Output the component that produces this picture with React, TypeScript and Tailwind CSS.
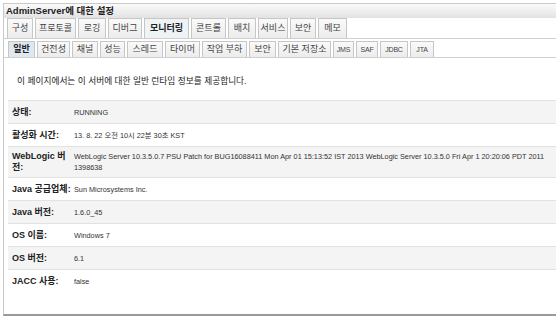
const topTabs = [
  { label: "구성", w: "w-[26px]" },
  { label: "프로토콜", w: "w-[41px]" },
  { label: "로깅", w: "w-[28px]" },
  { label: "디버그", w: "w-[34px]" },
  { label: "모니터링", w: "w-[45px]", active: true },
  { label: "콘트롤", w: "w-[35px]" },
  { label: "배치", w: "w-[28px]" },
  { label: "서비스", w: "w-[30px]" },
  { label: "보안", w: "w-[26px]" },
  { label: "메모", w: "w-[29px]" },
];

const subTabs = [
  { label: "일반", w: "w-[27px]", active: true },
  { label: "건전성", w: "w-[33px]" },
  { label: "채널", w: "w-[26px]" },
  { label: "성능", w: "w-[25px]" },
  { label: "스레드", w: "w-[36px]" },
  { label: "타이머", w: "w-[35px]" },
  { label: "작업 부하", w: "w-[45px]" },
  { label: "보안", w: "w-[27px]" },
  { label: "기본 저장소", w: "w-[53px]" },
  { label: "JMS", w: "w-[21px]", small: true },
  { label: "SAF", w: "w-[22px]", small: true },
  { label: "JDBC", w: "w-[28px]", small: true },
  { label: "JTA", w: "w-[24px]", small: true },
];

const rows = [
  { label: ["상태:"], value: ["RUNNING"] },
  { label: ["활성화 시간:"], value: ["13. 8. 22 오전 10시 22분 30초 KST"] },
  {
    label: ["WebLogic 버", "전:"],
    value: [
      "WebLogic Server 10.3.5.0.7 PSU Patch for BUG16088411 Mon Apr 01 15:13:52 IST 2013 WebLogic Server 10.3.5.0 Fri Apr 1 20:20:06 PDT 2011",
      "1398638",
    ],
    tall: true,
  },
  { label: ["Java 공급업체:"], value: ["Sun Microsystems Inc."] },
  { label: ["Java 버전:"], value: ["1.6.0_45"] },
  { label: ["OS 이름:"], value: ["Windows 7"] },
  { label: ["OS 버전:"], value: ["6.1"] },
  { label: ["JACC 사용:"], value: ["false"] },
];

export default function App() {
  return (
    <div className="w-[556px] h-[328px] overflow-hidden bg-white font-['Liberation_Sans','Noto_Sans_CJK_KR',sans-serif] text-[#222]">
      <div className="mt-[3px] ml-[3px] w-[620px] h-[313px] border border-[#c9c9c9] border-b-2 border-b-[#9a9a9a] bg-white">
        {/* title */}
        <div className="h-[14px] bg-gradient-to-b from-[#fbfbfb] to-[#e2e2e2] pl-[2px] flex items-center text-[9.5px] font-bold text-[#222] leading-none">
          AdminServer에 대한 설정
        </div>

        {/* top tabs */}
        <div className="flex gap-[2px] pl-[3px] border-b border-[#cfcfcf]">
          {topTabs.map((t, i) => (
            <div
              key={i}
              className={`${t.w} h-[20px] flex items-center justify-center border border-b-0 border-[#c6c6c6] text-[9px] leading-none whitespace-nowrap ${
                t.active
                  ? "bg-[#eef3f6] font-bold text-[#222]"
                  : "bg-gradient-to-b from-[#fafafa] to-[#ececec] text-[#444]"
              }`}
            >
              {t.label}
            </div>
          ))}
        </div>

        {/* sub tabs */}
        <div className="flex gap-[2px] pl-[4px] pt-[2px] border-b border-[#cfcfcf]">
          {subTabs.map((t, i) => (
            <div
              key={i}
              className={`${t.w} h-[16px] flex items-center justify-center border border-b-0 border-[#c6c6c6] leading-none whitespace-nowrap ${
                t.small ? "text-[7px] tracking-[-0.2px]" : "text-[9px]"
              } ${
                t.active
                  ? "bg-[#dde8f0] font-bold text-[#222]"
                  : "bg-gradient-to-b from-[#fafafa] to-[#ececec] text-[#444]"
              }`}
            >
              {t.label}
            </div>
          ))}
        </div>

        <p className="mt-[17px] pl-[13px] text-[8.7px] leading-[12px] text-[#222]">
          이 페이지에서는 이 서버에 대한 일반 런타임 정보를 제공합니다.
        </p>

        {/* table */}
        <div className="mt-[13px] ml-[4px]">
          {rows.map((r, i) => (
            <div
              key={i}
              className={`flex items-center border-t border-[#e2e2e2] ${
                r.tall ? "h-[31px]" : "h-[23px]"
              } ${i % 2 === 0 ? "bg-[#f4f4f4]" : "bg-white"}`}
            >
              <div className="min-w-[64px] pl-[4px] flex flex-col text-[9px] font-bold leading-[11px] whitespace-nowrap">
                {r.label.map((l, j) => (
                  <span key={j}>{l}</span>
                ))}
              </div>
              <div className="pl-[2px] flex flex-col text-[7.3px] leading-[11px] text-[#333] whitespace-nowrap">
                {r.value.map((v, j) => (
                  <span key={j}>{v}</span>
                ))}
              </div>
            </div>
          ))}
        </div>
      </div>
    </div>
  );
}
